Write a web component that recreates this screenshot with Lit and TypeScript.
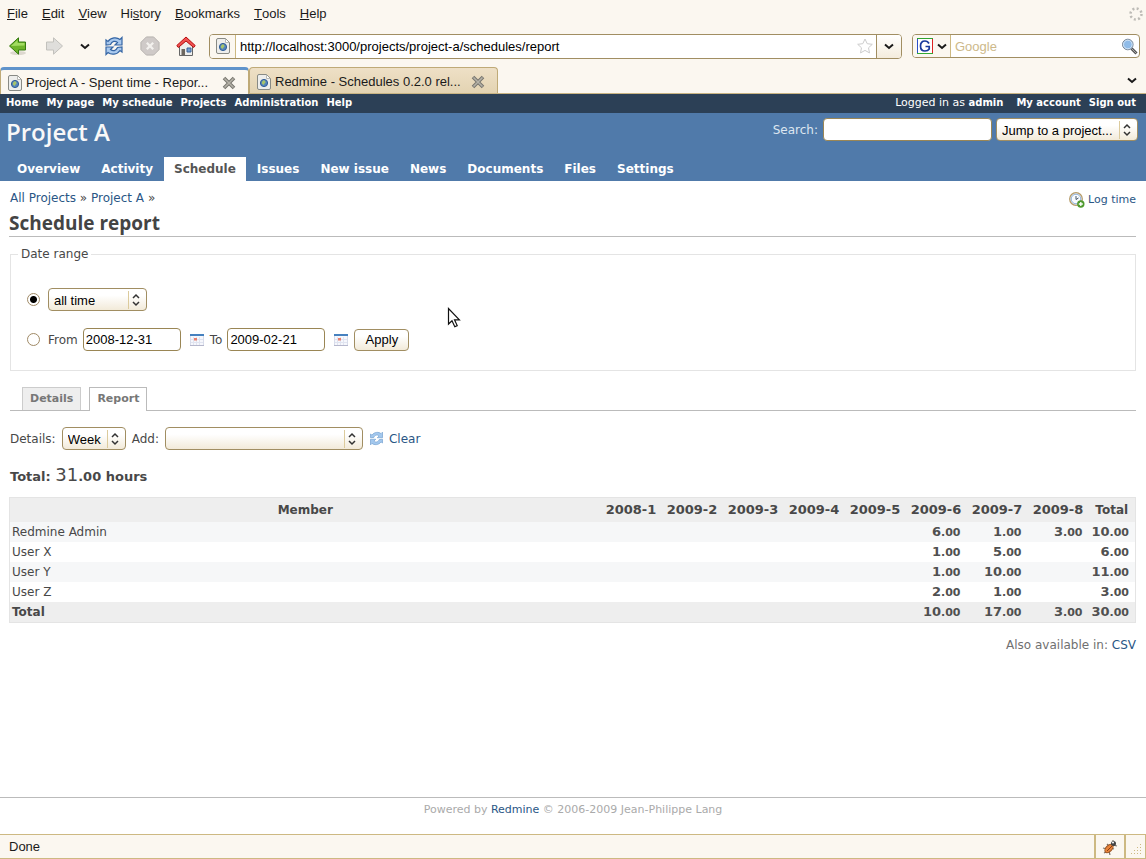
import { LitElement, html, css, svg } from "lit";
import { customElement, state } from "lit/decorators.js";

const menus = ["File", "Edit", "View", "History", "Bookmarks", "Tools", "Help"];
const accel: Record<string, number> = { History: 2 };
const topLinks = ["Home", "My page", "My schedule", "Projects", "Administration", "Help"];
const mainTabs = ["Overview", "Activity", "Schedule", "Issues", "New issue", "News", "Documents", "Files", "Settings"];
const weeks = ["2008-1", "2009-2", "2009-3", "2009-4", "2009-5", "2009-6", "2009-7", "2009-8"];
const rows: { name: string; hours: Record<string, string>; total: string }[] = [
  { name: "Redmine Admin", hours: { "2009-6": "6.00", "2009-7": "1.00", "2009-8": "3.00" }, total: "10.00" },
  { name: "User X", hours: { "2009-6": "1.00", "2009-7": "5.00" }, total: "6.00" },
  { name: "User Y", hours: { "2009-6": "1.00", "2009-7": "10.00" }, total: "11.00" },
  { name: "User Z", hours: { "2009-6": "2.00", "2009-7": "1.00" }, total: "3.00" },
  { name: "Total", hours: { "2009-6": "10.00", "2009-7": "17.00", "2009-8": "3.00" }, total: "30.00" },
];

const chevron = html`<svg width="10" height="7" viewBox="0 0 10 7"><path d="M1 1.500 5 5 9 1.500" fill="none" stroke="#1a1a1a" stroke-width="2"/></svg>`;
const updown = html`<svg class="updown" width="18" height="18" viewBox="0 0 18 18"><path d="M.5 0v18" stroke="#dccb9c"/><path d="M5 7 8 4l3 3M5 11l3 3 3-3" fill="none" stroke="#333" stroke-width="1.500"/></svg>`;
const closeX = html`<svg width="14" height="14" viewBox="0 0 14 14"><path d="m2 2 10 10m0-10L2 12" stroke="#77756e" stroke-width="3.600"/><path d="m2.500 2.500 9 9m0-9-9 9" stroke="#b5b2a8" stroke-width="1.600"/></svg>`;
const pageIcon = html`<svg width="14" height="16" viewBox="0 0 14 16"><path d="M2 .5h7.500l4 4V14a1.500 1.500 0 0 1-1.500 1.500H2A1.500 1.500 0 0 1 .5 14V2A1.500 1.500 0 0 1 2 .5Z" fill="#eeeeec" stroke="#888a85"/><path d="M9.500 1v3.500H13" fill="#fff" stroke="#b9bab6"/><circle cx="7" cy="9" r="3.600" fill="#5585bd" stroke="#2f5c96"/><path d="M5 8c1-2 2.500-2 3-1s1 1 0 2-1 2.500-2 1.500S4.500 9.500 5 8Z" fill="#a7c46a"/></svg>`;

const syncPath = svg`<path d="M2 9V4l2 1.500C7 1 13 1 16 3.500L18 1.500V9h-7l2.500-2.500C11 4.500 8 5 6.500 8.500Z"/><path d="M18 11v5l-2-1.500c-3 4.500-9 4.500-12 2L2 18.500V11h7l-2.500 2.500C9 15.500 12 15 13.500 11.500Z"/>`;
const calendar = html`<svg width="14" height="12" viewBox="0 0 14 12"><path d="M.5.5h13v11H.5z" fill="#f6f7fc" stroke="#d8dcea"/><path d="M3.500 3v8m3-8v8m3-8v8M1 5.500h12M1 8.500h12" stroke="#e0e4f0"/><path d="M0 0h14v2H0z" fill="#4681bf"/><path d="M4 4h3v2.500H4z" fill="#e9806f"/><path d="M0 11h14v1H0z" fill="#b5b7cc"/></svg>`;

@customElement("app-root")
export class AppRoot extends LitElement {
  @state() private range = "1";

  static styles = css`
    :host { display: flex; flex-direction: column; min-height: 100vh; background: #fff; color: #484848; font-family: "DejaVu Sans", sans-serif; font-size: 12px; line-height: 16px; }
    * { box-sizing: border-box; }
    svg { display: block; flex: none; }
    a { color: #2a5685; text-decoration: none; }
    ul { list-style: none; margin: 0; padding: 0; display: flex; }
    button, input, select { font-family: "Liberation Sans", Arial, sans-serif; font-size: 13px; color: #000; margin: 0; }
    .plain { background: none; border: 0; padding: 0; display: flex; align-items: center; justify-content: center; }
    .browser { font-family: "Liberation Sans", Arial, sans-serif; font-size: 13px; color: #1a1a1a; }
    .menubar { display: flex; align-items: center; justify-content: space-between; height: 28px; padding: 0 3px 0 7px; background: #fbf7f0; }
    .menubar ul { gap: 14px; }
    .menubar button { color: #1a1a1a; line-height: 16px; }
    .toolbar { display: flex; align-items: center; height: 38px; padding: 0 6px 2px 8px; background: #fbf7f0; }
    .icons { display: flex; align-items: center; width: 201px; }
    .icons .plain { width: 20px; height: 24px; }
    .icons .plain + .plain { margin-left: 16px; }
    .icons .drop { width: 12px; }
    .icons .drop.plain { margin-left: 15px; margin-right: -3px; }
    .icons .reload.plain { margin-left: 16px; }
    .url { flex: 1; display: flex; height: 25px; border: 1px solid #a18e62; border-radius: 4px; background: #fff; overflow: hidden; }
    .url .site { width: 26px; display: flex; align-items: center; justify-content: center; border-right: 1px solid #cdb982; background: #fbf7f0; }
    .url input, .find input { flex: 1; min-width: 0; border: 0; background: none; padding: 0 4px; outline: 0; }
    .url .plain { width: 25px; border-left: 1px solid #a18e62; background: linear-gradient(#fff, #f4ecdc); }
    .url .star { align-self: center; margin-right: 3px; }
    .find { width: 228px; margin-left: 10px; display: flex; align-items: center; height: 24px; border: 1px solid #a18e62; border-radius: 4px; background: #fff; overflow: hidden; }
    .find .engine { width: 38px; height: 22px; gap: 4px; border-right: 1px solid #cdb982; background: #fbf7f0; }
    .find input::placeholder { color: #cdb98a; opacity: 1; }
    .find .go { width: 20px; }
    .tabs { display: flex; height: 28px; padding: 1px 0 0; background: #fbf7f0; border-bottom: 1px solid #c9b483; }
    .tab { display: flex; align-items: center; width: 249px; padding: 3px 12px 0 7px; gap: 4px; border: 1px solid #bfaa77; border-bottom: 0; border-radius: 4px 4px 0 0; background: linear-gradient(#eee0c6, #e3d3b2); }
    .tab.on { background: #fbf7f0; border-top: 3px solid #5f93cb; padding-top: 1px; margin-bottom: -1px; }
    .tab span { flex: 1; white-space: nowrap; }
    .tabs .all { margin-left: auto; width: 28px; }
    .top { display: flex; justify-content: space-between; background: #2c4056; color: #fff; font-size: 11px; line-height: 18px; height: 19px; padding: 0 10px 0 6px; }
    .top ul { gap: 8px; }
    .top a { color: #fff; font-weight: bold; font-size: 10px; }
    .top .who { margin-right: 5px; }
    .head { display: flex; flex-direction: column; justify-content: space-between; height: 68px; background: #507aaa; color: #f8f8f8; }
    .head .line { display: flex; justify-content: space-between; align-items: flex-start; padding: 4px 8px 0 6px; }
    h1 { margin: 0; font: 600 24px/30px "Open Sans", sans-serif; }
    .quick { display: flex; align-items: center; gap: 4px; padding-top: 1px; }
    .quick label { margin-right: 1px; color: #dde6f0; }
    .nav { padding-left: 7px; gap: 1px; }
    .nav a { display: block; padding: 4px 10px; color: #fff; font-weight: bold; line-height: 16px; }
    .nav a.on { background: #fff; color: #555; }
    .text { height: 23px; border: 1px solid #9a8655; border-radius: 4px; padding: 0 2px; background: #fff; }
    .pick { display: inline-grid; }
    .pick > * { grid-area: 1 / 1; }
    .pick select { appearance: none; height: 23px; border: 1px solid #a18e62; border-radius: 4px; padding: 1px 20px 0 5px; background: linear-gradient(#fff 30%, #f2ead9); width: 100%; }
    .updown { justify-self: end; align-self: center; pointer-events: none; margin-right: 1px; }
    main { flex: 1; padding: 9px 10px 0; }
    .crumbs { display: flex; justify-content: space-between; height: 18px; }
    .log { display: flex; align-items: center; gap: 3px; padding-top: 1px; font-size: 11px; }
    h2 { margin: 0 0 9px -1px; font: 700 19px/30px "Open Sans", sans-serif; color: #444; border-bottom: 1px solid #bbb; height: 29px; }
    fieldset { margin: 0; min-width: 0; border: 1px solid #e4e4e4; padding: 26px 15px 0 16px; height: 125px; }
    legend { padding: 0 3px; margin-left: -9px; line-height: 16px; height: 16px; }
    .row { display: flex; align-items: center; height: 23px; }
    .row + .row { margin-top: 17px; }
    .row input[type="radio"] { appearance: none; width: 13px; height: 13px; border: 1px solid #a08a66; border-radius: 50%; margin: 0 8px 0 0; background: #fff; flex: none; }
    .row input[type="radio"]:checked { background: radial-gradient(circle, #000 3px, #fff 4px); }
    .date { width: 98px; margin-left: 5px; }
    .cal { margin: 0 6px 0 9px; }
    .apply { height: 22px; width: 55px; border: 1px solid #a18e62; border-radius: 4px; background: linear-gradient(#fff 30%, #f2ead9); padding: 0; }
    .subtabs { margin-top: 16px; padding-left: 12px; gap: 8px; border-bottom: 1px solid #bbb; height: 24px; font-size: 11px; font-weight: bold; }
    .subtabs a { display: block; height: 23px; padding: 3px 7px; border: 1px solid #ccc; border-bottom: 0; background: #eee; color: #777; }
    .subtabs a.on { height: 24px; border-color: #bbb; background: #fff; }
    .crit { display: flex; align-items: center; gap: 6px; margin-top: 16px; height: 23px; }
    .crit a { display: flex; align-items: center; gap: 5px; }
    .sum { margin: 15px 0 10px; font-weight: bold; font-size: 13px; line-height: 20px; }
    .sum big { font-size: 18px; font-weight: normal; }
    table { width: calc(100% + 1px); margin-left: -1px; border: 1px solid #e4e4e4; border-collapse: collapse; table-layout: fixed; }
    th, td { padding: 2px; height: 20px; line-height: 16px; font-weight: bold; }
    thead th { background: #eee; height: 24px; padding: 4px 2px; color: #484848; }
    thead .wk { width: 61px; font-size: 13px; }
    thead .tot { width: 47px; }
    td { text-align: right; padding: 0 6px 0 0; color: #505050; font-size: 13px; }
    td small { font-size: 11px; line-height: 1; }
    tbody th { text-align: left; font-weight: normal; }
    tbody tr:nth-child(odd) { background: #f6f7f8; }
    tbody tr.last { background: #eee; }
    tbody tr.last th { font-weight: bold; }
    .other { margin: 14px 0 0; text-align: right; color: #707070; }
    footer { border-top: 1px solid #bbb; height: 37px; padding-top: 4px; text-align: center; font-size: 11px; color: #aaa; }
    .status { display: flex; height: 25px; border: 1px solid #cdb982; border-left: 0; background: #fbf7f0; }
    .status > * { display: flex; align-items: center; justify-content: center; border-right: 2px solid #cdb982; width: 30px; }
    .status .msg { flex: 1; justify-content: flex-start; padding-left: 9px; }
    .status > :last-child { width: 19px; border-right: 0; align-items: flex-end; justify-content: flex-end; padding: 3px; }
    .pointer { position: absolute; left: 447px; top: 307px; pointer-events: none; }
  `;

  private hours(v?: string) {
    if (!v) return "";
    const [a, b] = v.split(".");
    return html`${a}<small>.${b}</small>`;
  }

  private menu(m: string) {
    const i = accel[m] ?? 0;
    return html`<li><button class="plain">${m.slice(0, i)}<u>${m[i]}</u>${m.slice(i + 1)}</button></li>`;
  }

  render() {
    return html`
      <div class="browser">
        <div class="menubar">
          <ul>${menus.map((m) => this.menu(m))}</ul>
          <svg width="14" height="14" viewBox="0 0 14 14"><circle cx="7" cy="7" r="5.500" fill="none" stroke="#bdbbb6" stroke-width="2.500" stroke-dasharray="2 2.320"/></svg>
        </div>
        <div class="toolbar">
          <div class="icons">
            <button class="plain" aria-label="Back"><svg width="20" height="20" viewBox="0 0 20 20"><ellipse cx="10" cy="17" rx="8" ry="2" fill="#ddd8cf"/><path d="M1.500 10 10.500 1.800V6h7v8h-7v4.200Z" fill="#6fb52c" stroke="#357a10"/><path d="m3 10 6.500-5.800V7h7v2.500Z" fill="#a3dc62"/></svg></button>
            <button class="plain" aria-label="Forward"><svg width="20" height="20" viewBox="0 0 20 20"><path d="M18.500 10 9.500 1.800V6h-7v8h7v4.200Z" fill="#dfdedb" stroke="#c2c1bc"/></svg></button>
            <button class="plain drop" aria-label="Recent pages">${chevron}</button>
            <button class="plain reload" aria-label="Reload"><svg width="20" height="20" viewBox="0 0 20 20"><g fill="#a9c9ee" stroke="#3465a4" stroke-width="1.200">${syncPath}</g></svg></button>
            <button class="plain" aria-label="Stop"><svg width="20" height="20" viewBox="0 0 22 22"><path d="M7 1h8l6 6v8l-6 6H7l-6-6V7Z" fill="#cfcac8" stroke="#b3afac"/><path d="m7.500 7.500 7 7m0-7-7 7" stroke="#f3f1ee" stroke-width="2.500"/></svg></button>
            <button class="plain" aria-label="Home"><svg width="20" height="21" viewBox="0 0 20 21"><path d="M3.500 10v9.500h13V10L10 4Z" fill="#eeeeec" stroke="#666"/><path d="M5.500 13h3.500v6H5.500z" fill="#6d675f"/><path d="M11 12h4v4h-4z" fill="#729fcf" stroke="#3c6399"/><path d="M10 1 .8 9.500l1.500 2L10 5l7.700 6.500 1.500-2Z" fill="#ef5050" stroke="#b70e0e"/></svg></button>
          </div>
          <div class="url">
            <span class="site">${pageIcon}</span>
            <input aria-label="Address" .value=${"http://localhost:3000/projects/project-a/schedules/report"} />
            <svg class="star" width="16" height="16" viewBox="0 0 16 16"><path d="m8 1 2.200 4.700 5.100.6-3.800 3.500 1 5.100L8 12.400l-4.500 2.500 1-5.100L.7 6.300l5.100-.6Z" fill="#fff" stroke="#ccc"/></svg>
            <button class="plain" aria-label="Show history">${chevron}</button>
          </div>
          <div class="find">
            <button class="plain engine" aria-label="Search engine"><svg width="16" height="16" viewBox="0 0 16 16"><path d="M0 0h16v16H0z" fill="#fff"/><path d="M.5 16V0" stroke="#2b50c8"/><path d="M0 .5h16" stroke="#2fa32f"/><path d="M15.500 1v15" stroke="#d22"/><path d="M0 15.500h16" stroke="#3a3"/><path d="M12 5.500C11 3.500 9.500 3 8 3 5 3 3.500 5 3.500 8S5 13 8 13c2 0 3.500-.8 4.200-2V8.500H8.500" fill="none" stroke="#1a3a9c" stroke-width="1.700"/></svg>${chevron}</button>
            <input aria-label="Web search" placeholder="Google" />
            <button class="plain go" aria-label="Search the web"><svg width="17" height="17" viewBox="0 0 17 17"><path d="m10.500 10.500 5 5" stroke="#555" stroke-width="3"/><path d="m10.500 10.500 4.500 4.500" stroke="#aaa"/><circle cx="6.800" cy="6.500" r="5.300" fill="#8fbbe8" stroke="#7a8796"/><circle cx="6.800" cy="6.500" r="4.300" fill="none" stroke="#d5e5f5"/></svg></button>
          </div>
        </div>
        <div class="tabs">
          <div class="tab on">${pageIcon}<span>Project A - Spent time - Repor...</span><button class="plain" aria-label="Close tab">${closeX}</button></div>
          <div class="tab">${pageIcon}<span>Redmine - Schedules 0.2.0 rel...</span><button class="plain" aria-label="Close tab">${closeX}</button></div>
          <button class="plain all" aria-label="List all tabs">${chevron}</button>
        </div>
      </div>

      <div class="top">
        <ul>${topLinks.map((t) => html`<li><a href="#">${t}</a></li>`)}</ul>
        <ul><li class="who">Logged in as <a href="#">admin</a></li><li><a href="#">My account</a></li><li><a href="#">Sign out</a></li></ul>
      </div>
      <header class="head">
        <div class="line">
          <h1>Project A</h1>
          <div class="quick">
            <label for="q">Search:</label>
            <input id="q" class="text" size="20" style="width:169px" />
            <span class="pick" style="width:142px"><select aria-label="Jump to a project"><option>Jump to a project...</option></select>${updown}</span>
          </div>
        </div>
        <nav><ul class="nav">${mainTabs.map((t) => html`<li><a href="#" class=${t === "Schedule" ? "on" : ""}>${t}</a></li>`)}</ul></nav>
      </header>

      <main>
        <div class="crumbs">
          <div><a href="#">All Projects</a> » <a href="#">Project A</a> »</div>
          <a href="#" class="log"><svg width="16" height="16" viewBox="0 0 16 16"><circle cx="7" cy="7" r="6.300" fill="#eef4fb" stroke="#b69b68" stroke-width="1.300"/><circle cx="7" cy="7" r="4.800" fill="#f8fbff" stroke="#8fb0d8"/><path d="M7 4v3.500l2.500-1.500" fill="none" stroke="#456"/><circle cx="11.800" cy="12" r="3.700" fill="#4f9a2e"/><path d="M9.800 12h4m-2-2v4" stroke="#fff" stroke-width="1.300"/></svg>Log time</a>
        </div>
        <h2>Schedule report</h2>
        <fieldset>
          <legend>Date range</legend>
          <div class="row">
            <input type="radio" name="range" aria-label="Preset period" .checked=${this.range === "1"} @change=${() => (this.range = "1")} />
            <span class="pick" style="width:99px"><select aria-label="Period"><option>all time</option></select>${updown}</span>
          </div>
          <div class="row">
            <input type="radio" name="range" aria-label="Custom period" .checked=${this.range === "2"} @change=${() => (this.range = "2")} />
            <label for="from">From</label><input id="from" class="text date" .value=${"2008-12-31"} /><span class="cal">${calendar}</span>
            <label for="to">To</label><input id="to" class="text date" .value=${"2009-02-21"} /><span class="cal">${calendar}</span>
            <button class="apply">Apply</button>
          </div>
        </fieldset>
        <ul class="subtabs"><li><a href="#">Details</a></li><li><a href="#" class="on">Report</a></li></ul>
        <div class="crit">
          <label for="cols">Details:</label>
          <span class="pick" style="width:64px"><select id="cols"><option>Week</option></select>${updown}</span>
          <label for="add">Add:</label>
          <span class="pick" style="width:198px"><select id="add"><option></option></select>${updown}</span>
          <a href="#"><svg width="15" height="15" viewBox="0 0 20 20"><g fill="#a3c8ee" stroke="#7ba5d3" stroke-width="1">${syncPath}</g></svg>Clear</a>
        </div>
        <p class="sum">Total: <big>31</big>.00 hours</p>
        <table>
          <thead><tr><th>Member</th>${weeks.map((w) => html`<th class="wk">${w}</th>`)}<th class="tot">Total</th></tr></thead>
          <tbody>
            ${rows.map((r) => html`<tr class=${r.name === "Total" ? "last" : ""}><th>${r.name}</th>${weeks.map((w) => html`<td>${this.hours(r.hours[w])}</td>`)}<td>${this.hours(r.total)}</td></tr>`)}
          </tbody>
        </table>
        <p class="other">Also available in: <a href="#">CSV</a></p>
      </main>
      <footer>Powered by <a href="#">Redmine</a> © 2006-2009 Jean-Philippe Lang</footer>
      <div class="browser status">
        <span class="msg">Done</span>
        <span><svg width="16" height="16" viewBox="0 0 16 16"><path d="m1 9 4 1m-3 4 4-2m2 4-1-4M5 5l2 2m4-6 0 3m4 3-4-1m1 4-3-1" stroke="#7a746a" stroke-width="1.200"/><ellipse cx="7" cy="9.500" rx="5" ry="3" transform="rotate(-45 7 9.500)" fill="#e8843a" stroke="#9a5220"/><path d="m5 12 5-5" stroke="#8a3d10"/><circle cx="11.500" cy="4.500" r="2.500" fill="#444"/><circle cx="11" cy="3.500" r="1" fill="#fff"/></svg></span>
        <span><svg width="12" height="12" viewBox="0 0 12 12" fill="#cdb982"><path d="M10 1h1v1h-1zM10 4h1v1h-1zM7 4h1v1H7zM10 7h1v1h-1zM7 7h1v1H7zM4 7h1v1H4zM10 10h1v1h-1zM7 10h1v1H7zM4 10h1v1H4zM1 10h1v1H1z"/></svg></span>
      </div>
      <svg class="pointer" width="14" height="21" viewBox="0 0 14 21"><path d="M1.500 1.500v15.500l3.500-3.300 2.800 6 2.400-1.100-2.700-5.800h4.900Z" fill="#fff" stroke="#111" stroke-width="1.200"/></svg>
    `;
  }
}
